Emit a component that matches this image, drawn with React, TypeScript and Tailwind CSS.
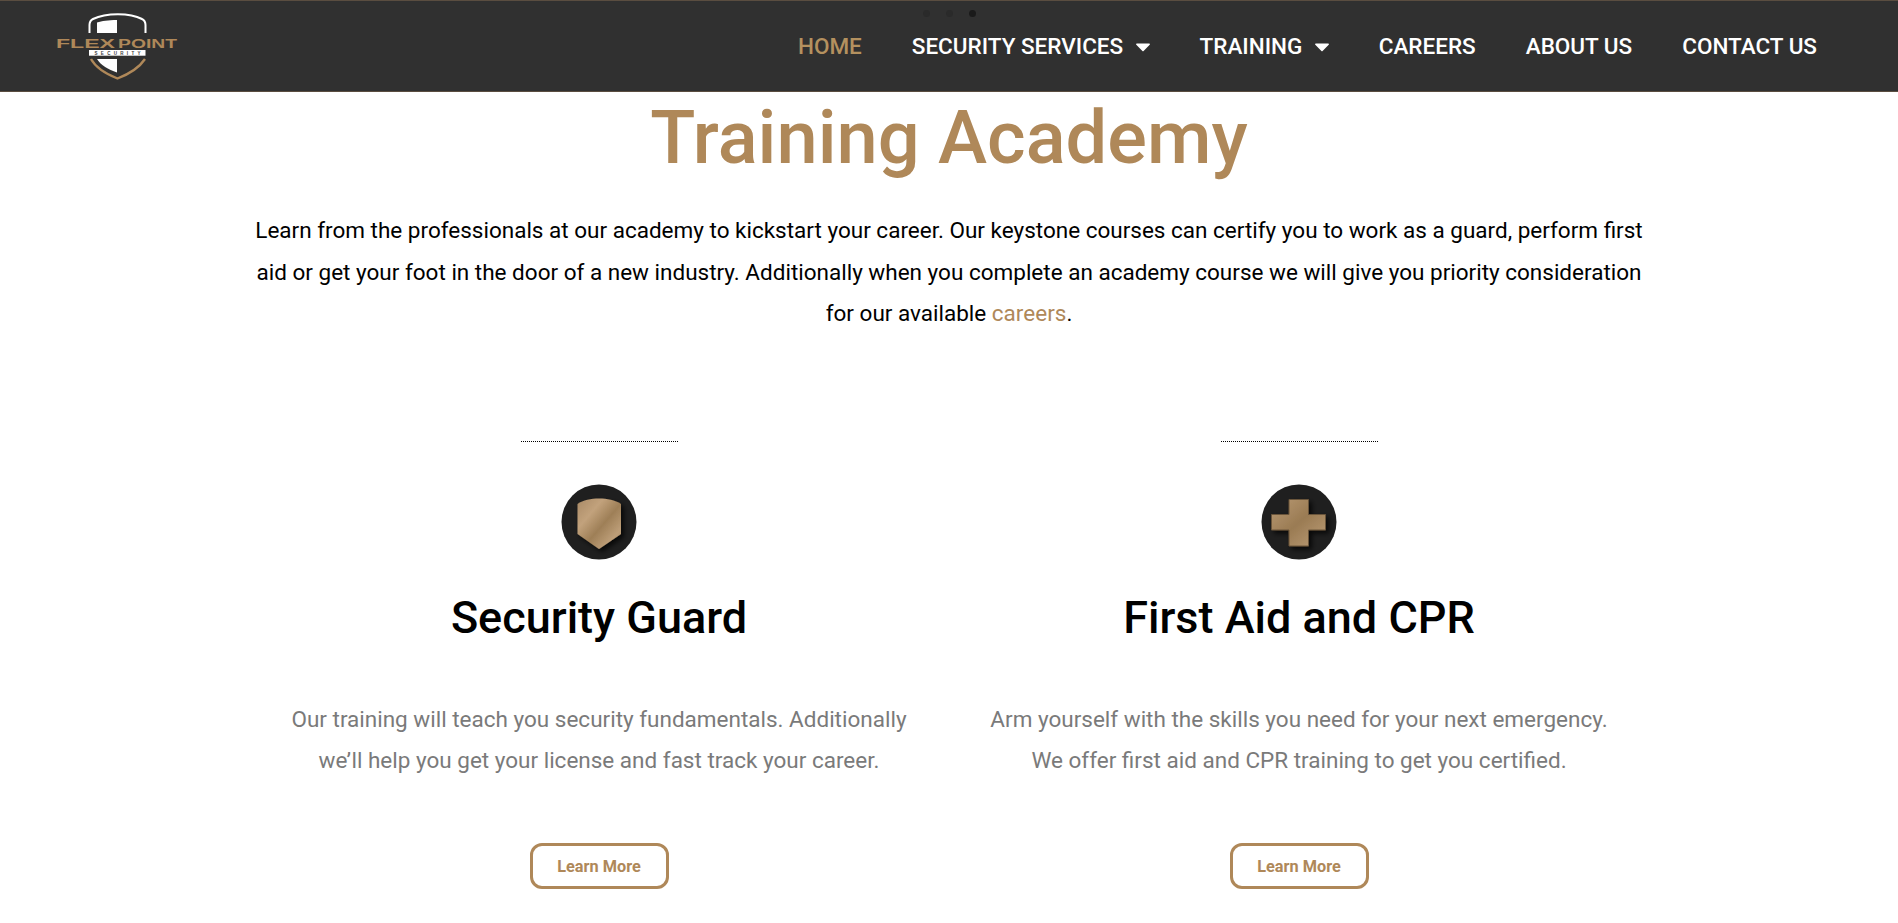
const gold = "#AF8859";

function Logo() {
  return (
    <svg width="126" height="70" viewBox="0 0 126 70" className="block">
      <path d="M35.500 22 V14 C35.500 10.500 37 9 39 8 C52 1.500 76 1.500 88 8 C90 9 91.500 10.500 91.500 14 V22" fill="none" stroke="#fff" strokeWidth="2" />
      <path d="M43 22 V11.500 C48 10 54 9 63 9 V22 Z" fill="#fff" />
      <text x="2" y="37" textLength="59" lengthAdjust="spacingAndGlyphs" fill={gold} fontFamily="'Liberation Sans', sans-serif" fontWeight="700" fontSize="12.800">FLEX</text>
      <text x="64" y="37" textLength="59" lengthAdjust="spacingAndGlyphs" fill={gold} fontFamily="'Liberation Sans', sans-serif" fontWeight="700" fontSize="12.800">POINT</text>
      <rect x="35" y="39" width="56.500" height="5.700" fill="#fff" />
      <text x="63.500" y="44" textAnchor="middle" textLength="46" fill="#444" fontFamily="'Liberation Sans', sans-serif" fontWeight="700" fontSize="4.500">SECURITY</text>
      <path d="M37 48 C42 57 52 63 63.500 67.500 C75 63 85 57 91 48" fill="none" stroke={gold} strokeWidth="2.400" />
      <path d="M43 48 H63 V61.500 C54 58.500 47 54.500 43 48 Z" fill="#fff" />
    </svg>
  );
}

function Caret() {
  return (
    <svg width="14" height="9" viewBox="0 0 14 9" className="ml-[12.400px] mt-[2px]">
      <path d="M0.800 0.500 H13.200 C13.900 0.500 14.200 1.300 13.700 1.800 L7.600 8 C7.300 8.400 6.700 8.400 6.400 8 L0.300 1.800 C-0.200 1.300 0.100 0.500 0.800 0.500 Z" fill="#fff" />
    </svg>
  );
}

function NavItem({ label, active, caret }: { label: string; active?: boolean; caret?: boolean }) {
  return (
    <a className={`flex items-center text-[22.500px] font-medium leading-none ${active ? "text-[#B4915F]" : "text-white"}`}>
      {label}
      {caret && <Caret />}
    </a>
  );
}

function ShieldIcon() {
  return (
    <svg width="76" height="76" viewBox="0 0 76 76" className="block">
      <defs>
        <linearGradient id="g1" x1="0" y1="0" x2="1" y2="1">
          <stop offset="0" stopColor="#A98A66" />
          <stop offset="0.3" stopColor="#C2A27C" />
          <stop offset="0.55" stopColor="#9E7F57" />
          <stop offset="0.8" stopColor="#BD9E78" />
          <stop offset="1" stopColor="#A5865F" />
        </linearGradient>
        <filter id="s1" x="-30%" y="-30%" width="170%" height="170%">
          <feDropShadow dx="3" dy="3" stdDeviation="2.500" floodColor="#000" floodOpacity="0.75" />
        </filter>
      </defs>
      <circle cx="38" cy="38" r="37.500" fill="#1F1F1F" />
      <path d="M16.500 20 C22 16 30 14.500 38 14.500 C46 14.500 54 16 60 20 V50 L38 65 L16.500 50 Z" fill="url(#g1)" filter="url(#s1)" />
    </svg>
  );
}

function CrossIcon() {
  return (
    <svg width="76" height="76" viewBox="0 0 76 76" className="block">
      <defs>
        <linearGradient id="g2" x1="0" y1="0" x2="1" y2="1">
          <stop offset="0" stopColor="#B99A74" />
          <stop offset="0.5" stopColor="#9A7B53" />
          <stop offset="1" stopColor="#BC9D77" />
        </linearGradient>
        <filter id="s2" x="-30%" y="-30%" width="170%" height="170%">
          <feDropShadow dx="3" dy="3" stdDeviation="2.500" floodColor="#000" floodOpacity="0.75" />
        </filter>
      </defs>
      <circle cx="38" cy="38" r="37.500" fill="#1F1F1F" />
      <path d="M28 15.500 H47.500 V30.500 H64.500 V46 H47.500 V62 H28 V46 H10.500 V30.500 H28 Z" fill="url(#g2)" stroke="#6A543B" strokeWidth="1" filter="url(#s2)" />
    </svg>
  );
}

function Card({ icon, title, lines }: { icon: React.ReactNode; title: string; lines: string[] }) {
  return (
    <div className="flex w-[700px] flex-col items-center">
      <div className="h-px w-[157px] border-t border-dotted border-black" />
      <div className="mt-[42px]">{icon}</div>
      <h2 className="mt-[30px] text-[45px] font-medium leading-[56px] text-black">{title}</h2>
      <p className="mt-[53px] text-center text-[22.500px] leading-[41.500px] text-[#7A7A7A]">
        {lines.map((l) => (
          <span key={l} className="block">{l}</span>
        ))}
      </p>
      <a className="mt-[61px] flex h-[46px] w-[139px] items-center justify-center rounded-xl border-[3px] border-[#AF8859] pt-[3px] text-[16.300px] font-bold text-[#AF8859]">
        Learn More
      </a>
    </div>
  );
}

export default function App() {
  return (
    <div className="h-[923px] overflow-hidden bg-white font-['Roboto',sans-serif]">
      <header className="relative flex h-[92px] items-center justify-between border-y border-[#5A4D40] bg-[#303030] pl-[54px] pr-[81px]">
        <Logo />
        <div className="absolute left-[923px] top-[9px] flex gap-[16px]">
          <span className="size-[7px] rounded-full bg-[#2A2A2A]" />
          <span className="size-[7px] rounded-full bg-[#2A2A2A]" />
          <span className="size-[7px] rounded-full bg-[#1A1A1A]" />
        </div>
        <nav className="mt-[1px] flex items-center gap-[50px]">
          <NavItem label="HOME" active />
          <NavItem label="SECURITY SERVICES" caret />
          <NavItem label="TRAINING" caret />
          <NavItem label="CAREERS" />
          <NavItem label="ABOUT US" />
          <NavItem label="CONTACT US" />
        </nav>
      </header>
      <main className="flex flex-col items-center">
        <h1 className="mt-[1px] text-[74px] font-medium leading-[90px] text-[#AF8859]">Training Academy</h1>
        <p className="mt-[27px] w-[1400px] text-center text-[22.500px] leading-[41.500px] text-black">
          <span className="block">Learn from the professionals at our academy to kickstart your career. Our keystone courses can certify you to work as a guard, perform first</span>
          <span className="block">aid or get your foot in the door of a new industry. Additionally when you complete an academy course we will give you priority consideration</span>
          <span className="block">for our available <a className="text-[#AF8859]">careers</a>.</span>
        </p>
        <div className="mt-[106px] flex w-[1400px]">
          <Card icon={<ShieldIcon />} title="Security Guard" lines={["Our training will teach you security fundamentals. Additionally", "we’ll help you get your license and fast track your career."]} />
          <Card icon={<CrossIcon />} title="First Aid and CPR" lines={["Arm yourself with the skills you need for your next emergency.", "We offer first aid and CPR training to get you certified."]} />
        </div>
      </main>
    </div>
  );
}
